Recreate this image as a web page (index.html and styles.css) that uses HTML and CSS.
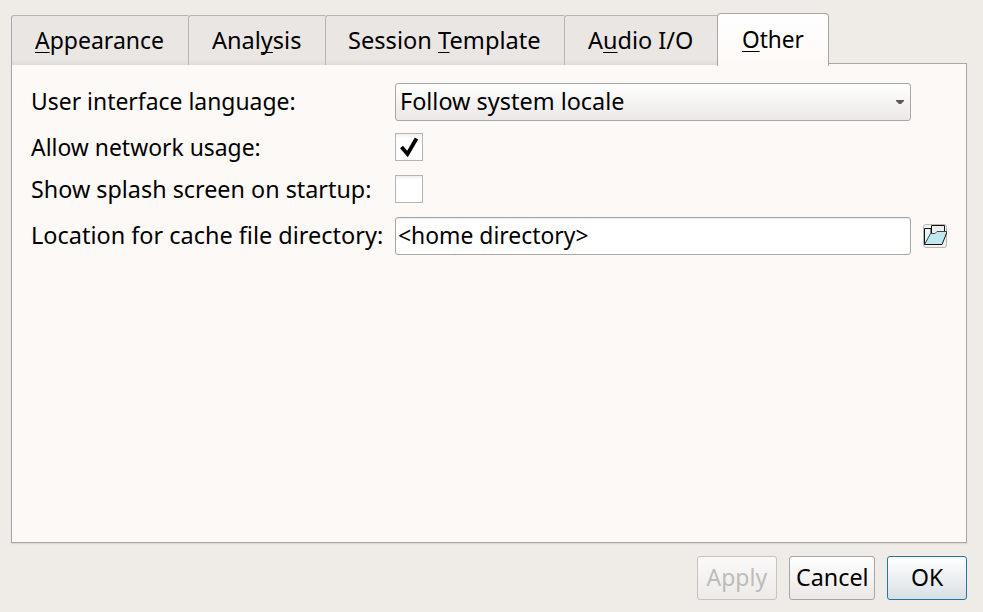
FILE: index.html
```html
<!DOCTYPE html>
<html lang="en">
<head>
<meta charset="utf-8">
<title>Preferences</title>
<link rel="stylesheet" href="styles.css">
</head>
<body>
<main class="dialog">
  <nav class="tabs">
    <div class="tab appearance"><span class="fit" data-width="129"><span><u>A</u>ppearance</span></span></div>
    <div class="tab analysis"><span class="fit" data-width="89"><span>Anal<u>y</u>sis</span></span></div>
    <div class="tab session"><span class="fit" data-width="193"><span>Session <u>T</u>emplate</span></span></div>
    <div class="tab audio"><span class="fit" data-width="105"><span>A<u>u</u>dio I/O</span></span></div>
    <div class="tab active"><span class="fit" data-width="62"><span><u>O</u>ther</span></span></div>
  </nav>
  <section class="pane">
    <div class="row tall">
      <label class="fit" data-width="265"><span>User interface language:</span></label>
      <div class="field select"><span class="fit" data-width="224"><span>Follow system locale</span></span>
        <svg class="arrow" width="8" height="5" viewBox="0 0 8 5"><path d="M0 0H8V1L5 4H3L0 1Z" fill="#5b5959"/></svg>
      </div>
    </div>
    <div class="row">
      <label class="fit" data-width="230"><span>Allow network usage:</span></label>
      <div class="check"><svg width="26" height="26" viewBox="0 0 26 26"><path d="M5.5 13L11.5 20L20.5 4.5" fill="none" stroke="#000" stroke-width="3.8"/></svg></div>
    </div>
    <div class="row">
      <label class="fit" data-width="340"><span>Show splash screen on startup:</span></label>
      <div class="check"></div>
    </div>
    <div class="row tall">
      <label class="fit" data-width="352"><span>Location for cache file directory:</span></label>
      <div class="field"><span class="fit" data-width="190"><span>&lt;home directory&gt;</span></span></div>
      <div class="browse"><svg width="24" height="24" viewBox="0 0 24 24">
        <path d="M1.5 20.5V4.5H8V12L6 14Z" fill="#e5f6fa" stroke="#111"/>
        <path d="M8.5 9.5V1.5H21.5V8" fill="#eee" stroke="#111"/>
        <path d="M1.5 20.5L7.5 9.5H12L14 7.5H24L19 20.5Z" fill="#c0e8f3"/>
        <path d="M1.5 20.5H19L24 8" fill="none" stroke="#111"/>
        <path d="M1.5 20.5L7.5 9.5H12L14 7.5H24" fill="none" stroke="#444"/>
      </svg></div>
    </div>
  </section>
  <footer class="actions">
    <button class="apply" disabled><span class="fit" data-width="61"><span>Apply</span></span></button>
    <button class="cancel"><span class="fit" data-width="73"><span>Cancel</span></span></button>
    <button class="ok"><span class="fit" data-width="32"><span>OK</span></span></button>
  </footer>
</main>
<script src="fit.js"></script>
</body>
</html>
```
FILE: styles.css
```css
* { box-sizing: border-box; }
body {
  margin: 0;
  background: #efebe7;
  color: #000;
  font: 23px/38px "Noto Sans", sans-serif;
  overflow: hidden;
}
.dialog {
  width: 983px;
  height: 612px;
  padding: 13px 16px 12px 11px;
  display: flex;
  flex-direction: column;
}
.fit { display: block; flex: none; white-space: nowrap; }
.fit > span { display: inline-block; transform-origin: 0 50%; }
u { text-decoration-thickness: 1px; text-underline-offset: 3px; text-decoration-skip-ink: none; }

.tabs { display: flex; align-items: flex-start; height: 53px; position: relative; z-index: 1; margin-bottom: -3px; }
.tab {
  display: flex;
  align-items: center;
  height: 50px;
  margin-top: 2px;
  padding: 0 0 2px 22px;
  border: 1px solid #b8b5b1;
  border-width: 1px 0 0 1px;
  border-radius: 3px 0 0 0;
  background: linear-gradient(#e9e6e3 0 88%, #dedbd8);
}
.appearance { width: 177px; padding-left: 23px; border-left-color: #a9a6a3; }
.analysis { width: 137px; padding-left: 23px; }
.session { width: 239px; }
.audio { width: 153px; padding-left: 23px; }
.tab.active {
  width: 112px;
  height: 53px;
  margin-top: 0;
  padding: 0 0 3px 24px;
  border-width: 1px 1px 0;
  border-color: #a9a6a3;
  border-radius: 4px 4px 0 0;
  background: linear-gradient(#fff, #fdf9f6);
}

.pane {
  height: 480px;
  padding: 19px 18px 0 19px;
  border: 1px solid #a9a6a3;
  background: #fdf9f6;
  box-shadow: 0 1px 1px #dedad6;
}
.row { display: grid; grid-template: 28px / 364px 516px 24px; align-items: center; margin-bottom: 14px; line-height: 28px; }
.row.tall { grid-template-rows: 38px; margin-bottom: 12px; line-height: 38px; }
.row.tall label span { position: relative; top: -1px; }
.field {
  display: flex;
  height: 38px;
  align-items: center;
  padding-left: 2px;
  border: 1px solid #a9a6a3;
  border-radius: 3px;
  background: #fff;
  box-shadow: inset 0 1px 1px #e8e8e8;
}
.field .fit span { position: relative; top: -1px; }
.select { justify-content: space-between; padding: 0 6px 0 4px; background: linear-gradient(#fff, #ebe8e6); box-shadow: none; }
.arrow { display: block; }
.check { width: 28px; height: 28px; border: 1px solid #b7b4b2; background: linear-gradient(#eee, #fff 4px); }
.check svg { display: block; }
.browse { width: 24px; height: 24px; margin-left: 12px; border: 1px solid #b9b6b3; border-radius: 3px; background: #f4f2ef; }
.browse svg { display: block; margin: -1px; }

.actions { display: flex; justify-content: flex-end; gap: 12px; margin-top: 13px; }
button {
  display: flex;
  align-items: center;
  justify-content: center;
  width: 80px;
  height: 44px;
  padding: 0;
  border: 1px solid #a9a6a3;
  border-radius: 3px;
  background: linear-gradient(#fff, #ebe8e6);
  color: #000;
  font: inherit;
  text-align: left;
}
button .fit { margin-top: -2px; }
.cancel { width: 86px; }
.apply { color: #bdbbba; border-color: #c5c2bf; background: linear-gradient(#fbfaf9, #edeae7); }
.ok { border-color: #2574a4; background: linear-gradient(#fff, #d8e0e4); }
```
FILE: fit.js
```js
document.querySelectorAll('.fit').forEach(function (box) {
  var text = box.firstElementChild;
  var width = Number(box.dataset.width);
  var scale = width / text.offsetWidth;
  box.style.width = width + 'px';
  text.style.transform = 'scaleX(' + scale + ')';
});
```
